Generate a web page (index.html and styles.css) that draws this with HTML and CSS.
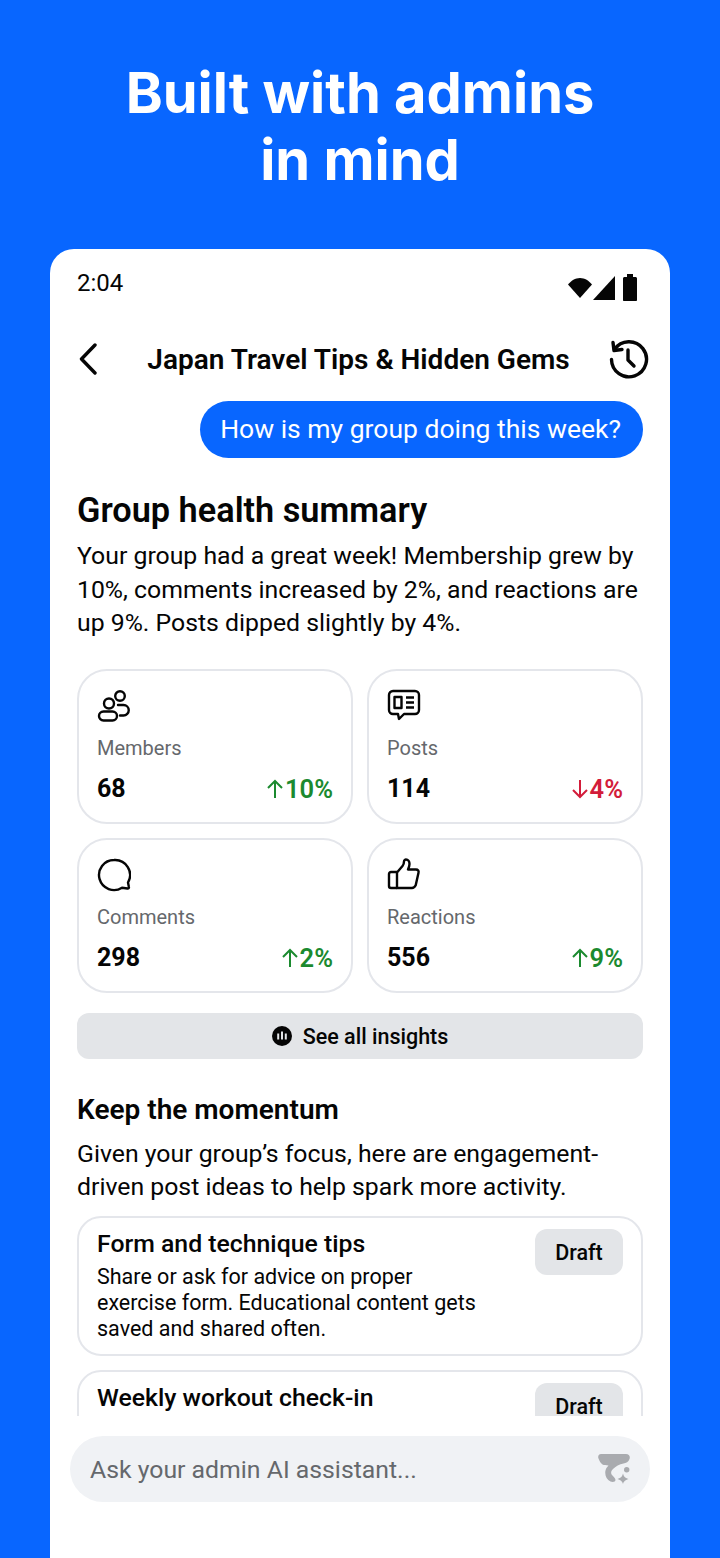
FILE: index.html
```html
<!DOCTYPE html>
<html lang="en">
<head>
    <meta charset="UTF-8" />
    <title>Built with admins in mind</title>
    <link rel="stylesheet" href="styles.css">
</head>
<body>
<h1 class="promo_title">Built with admins<br>in mind</h1>
<div class="phone">
    <div class="status_bar">
        <span class="status_time">2:04</span>
        <div class="status_icons">
            <svg class="wifi_icon" width="24" height="20" viewBox="0 0 24 20"><path d="M0 6.500C3 2.800 7.300 0 12 0s9 2.800 12 6.500L12 20z" fill="#050505"/></svg>
            <svg class="signal_icon" width="22" height="24" viewBox="0 0 22 24"><path d="M22 0v24H0z" fill="#050505"/></svg>
            <svg class="battery_icon" width="14" height="27" viewBox="0 0 14 27"><path d="M4 0h6v3h2.500c.8 0 1.500.7 1.500 1.500V26c0 .6-.5 1-1 1H1c-.6 0-1-.4-1-1V4.500C0 3.700.7 3 1.500 3H4z" fill="#050505"/></svg>
        </div>
    </div>

    <div class="top_bar">
        <svg class="back_icon" width="20" height="32" viewBox="0 0 20 32"><path d="M17 2 3.500 16 17 30" fill="none" stroke="#050505" stroke-width="3.400" stroke-linecap="round" stroke-linejoin="round"/></svg>
        <h2 class="top_title">Japan Travel Tips &amp; Hidden Gems</h2>
        <svg class="history_icon" width="40" height="40" viewBox="0 0 40 40"><g fill="none" stroke="#050505" stroke-width="3.400" stroke-linecap="round" stroke-linejoin="round"><path d="M5.500 10.500A17.500 17.500 0 1 1 2.500 20.500"/><path d="M4 3.500 5 11.500 13 10.500"/><path d="M19 11v10l6 6"/></g></svg>
    </div>

    <div class="chat">
        <div class="bubble_row"><div class="bubble">How is my group doing this week?</div></div>

        <h3 class="summary_title">Group health summary</h3>
        <p class="body_text">Your group had a great week! Membership grew by 10%, comments increased by 2%, and reactions are up 9%. Posts dipped slightly by 4%.</p>

        <div class="stat_grid">
            <div class="stat">
                <svg class="stat_icon" width="34" height="34" viewBox="0 0 34 34"><g fill="none" stroke="#050505" stroke-width="2.400"><circle cx="12" cy="14.500" r="5"/><rect x="2" y="22.500" width="18" height="9" rx="4.500"/><circle cx="23" cy="7" r="4.800"/><path d="M21 16h5.500a5.200 5.200 0 0 1 0 10.500H23" stroke-linecap="round"/></g></svg>
                <div class="stat_label">Members</div>
                <div class="stat_row"><span class="stat_num">68</span><span class="stat_delta up"><svg width="18" height="20" viewBox="0 0 18 20"><path d="M9 19V2M2 9l7-7 7 7" fill="none" stroke="currentColor" stroke-width="2"/></svg>10%</span></div>
            </div>
            <div class="stat">
                <svg class="stat_icon" width="34" height="34" viewBox="0 0 34 34"><g fill="none" stroke="#050505" stroke-width="2.400" stroke-linejoin="round"><path d="M6 2h22a4 4 0 0 1 4 4v15a4 4 0 0 1-4 4H17l-5 5-1-5H6a4 4 0 0 1-4-4V6a4 4 0 0 1 4-4z"/><rect x="7.500" y="8" width="7" height="11"/><path d="M19 8.500h8M19 13.500h8M19 18.500h8"/></g></svg>
                <div class="stat_label">Posts</div>
                <div class="stat_row"><span class="stat_num">114</span><span class="stat_delta down"><svg width="18" height="20" viewBox="0 0 18 20"><path d="M9 1v17M2 11l7 7 7-7" fill="none" stroke="currentColor" stroke-width="2"/></svg>4%</span></div>
            </div>
            <div class="stat">
                <svg class="stat_icon" width="34" height="34" viewBox="0 0 34 34"><path d="M17 2a15 15 0 1 0 8 27.700l5.500.8c1 .1 1.600-.5 1.400-1.400L31 24.500A15 15 0 0 0 17 2z" fill="none" stroke="#050505" stroke-width="2.400" stroke-linejoin="round"/></svg>
                <div class="stat_label">Comments</div>
                <div class="stat_row"><span class="stat_num">298</span><span class="stat_delta up"><svg width="18" height="20" viewBox="0 0 18 20"><path d="M9 19V2M2 9l7-7 7 7" fill="none" stroke="currentColor" stroke-width="2"/></svg>2%</span></div>
            </div>
            <div class="stat">
                <svg class="stat_icon" width="34" height="34" viewBox="0 0 34 34"><g fill="none" stroke="#050505" stroke-width="2.400" stroke-linejoin="round"><path d="M10 30V14.500L15.500 8c1-1.300 1.500-2.500 1.500-4.500 0-1.200 1-2 2-2 2 0 3.500 2 3.500 4.500 0 2-.6 3.500-1.500 5.500h8c2 0 3 1.500 2.500 3.200l-2.800 12.600C27.800 29 26.800 30 25 30z"/><path d="M10 14H4a2 2 0 0 0-2 2v12a2 2 0 0 0 2 2h6"/></g></svg>
                <div class="stat_label">Reactions</div>
                <div class="stat_row"><span class="stat_num">556</span><span class="stat_delta up"><svg width="18" height="20" viewBox="0 0 18 20"><path d="M9 19V2M2 9l7-7 7 7" fill="none" stroke="currentColor" stroke-width="2"/></svg>9%</span></div>
            </div>
        </div>

        <div class="insights_btn">
            <svg width="20" height="20" viewBox="0 0 20 20"><circle cx="10" cy="10" r="10" fill="#050505"/><path d="M6.200 7.500v6M10 5.500v8M13.800 7.500v6" stroke="#e3e5e8" stroke-width="2" fill="none"/></svg>
            See all insights
        </div>

        <h3 class="momentum_title">Keep the momentum</h3>
        <p class="body_text">Given your group’s focus, here are engagement-driven post ideas to help spark more activity.</p>

        <div class="idea">
            <div class="idea_text">
                <div class="idea_title">Form and technique tips</div>
                <div class="idea_desc">Share or ask for advice on proper exercise form. Educational content gets saved and shared often.</div>
            </div>
            <div class="draft_btn">Draft</div>
        </div>
        <div class="idea">
            <div class="idea_text">
                <div class="idea_title">Weekly workout check-in</div>
            </div>
            <div class="draft_btn">Draft</div>
        </div>
    </div>

    <div class="ask_bar">
        <span class="ask_text">Ask your admin AI assistant...</span>
        <svg width="32" height="30" viewBox="0 0 32 30"><path d="M3 0h25c3 0 4.500 2.500 3.500 5-1 3-3.500 4-6 4.500-4 .8-8 3-10.500 5.500-2 2-2.500 4-1 6 1.500 2 3.500 3 3.500 5 0 2-3 2.500-5 1.500-4-2-6-7-5-11 .5-2 1.500-3.500 3-5-2.500-.5-4.500 0-6-1-2-1.500-3-3.500-4-6C-.5 2 1 0 3 0z" fill="#a9abaf"/><circle cx="28.700" cy="15.700" r="2.700" fill="#a9abaf"/><path d="M25 19.500c.8 3 1.800 4.200 5.500 5.500-3.700 1.300-4.700 2.500-5.500 5-.8-2.500-1.800-3.700-5.500-5 3.700-1.300 4.700-2.500 5.500-5.500z" fill="#a9abaf"/></svg>
    </div>
</div>
</body>
</html>
```

FILE: styles.css
```css
*{
    box-sizing: border-box;
}
html,body{
    margin:0;
    padding:0;
}
body{
    width:720px;
    height:1558px;
    overflow:hidden;
    background:#0866ff;
    font-family:Roboto,"Liberation Sans",sans-serif;
    color:#050505;
}
h1,h2,h3,p{
    margin:0;
}

.promo_title{
    padding-top:60px;
    height:249px;
    text-align:center;
    font-family:Inter,"Liberation Sans",sans-serif;
    font-size:56px;
    line-height:67px;
    font-weight:700;
    color:#fff;
}

.phone{
    width:620px;
    height:1309px;
    margin:0 auto;
    background:#fff;
    border-radius:24px 24px 0 0;
    display:flex;
    flex-direction:column;
}

.status_bar{
    height:68px;
    padding:0 33px 0 27px;
    display:flex;
    justify-content:space-between;
    align-items:center;
}
.status_time{
    font-size:24px;
}
.status_icons{
    margin-top:9px;
    display:flex;
    align-items:flex-end;
    gap:1px;
}
.wifi_icon{
    margin-bottom:3px;
}
.signal_icon{
    margin-bottom:1px;
}
.battery_icon{
    margin-left:7px;
}

.top_bar{
    height:84px;
    padding:0 21px 0 28px;
    display:flex;
    align-items:center;
    justify-content:space-between;
}
.top_title{
    margin:1px 0 0 10px;
    font-size:28px;
    font-weight:600;
}

.chat{
    flex:none;
    padding:0 27px;
    height:1015px;
    overflow:hidden;
}

.bubble_row{
    display:flex;
    justify-content:flex-end;
}
.bubble{
    height:57px;
    padding:0 22px 0 20px;
    border-radius:29px;
    background:#0866ff;
    color:#fff;
    font-size:26.500px;
    line-height:56px;
}

.summary_title{
    margin-top:32px;
    font-size:34.300px;
    line-height:40px;
    font-weight:600;
}
.body_text{
    font-size:24.800px;
    line-height:33.500px;
}
.summary_title + .body_text{
    margin-top:9px;
}

.stat_grid{
    margin-top:29px;
    display:grid;
    grid-template-columns:276px 276px;
    gap:14px;
}
.stat{
    height:155px;
    padding:18px 18px 0;
    border:2px solid #e4e6eb;
    border-radius:30px;
}
.stat_icon{
    display:block;
}
.stat_label{
    margin-top:12px;
    font-size:20px;
    line-height:26px;
    color:#65686c;
}
.stat_row{
    margin-top:12px;
    display:flex;
    justify-content:space-between;
    align-items:center;
    line-height:32px;
}
.stat_num{
    font-size:25px;
    font-weight:700;
}
.stat_delta{
    display:flex;
    align-items:center;
    gap:1px;
    font-size:25.500px;
    font-weight:600;
}
.up{
    color:#1b8a2f;
}
.down{
    color:#d31c3a;
}

.insights_btn{
    margin-top:20px;
    height:46px;
    padding-top:1px;
    border-radius:12px;
    background:#e3e5e8;
    display:flex;
    align-items:center;
    justify-content:center;
    gap:11px;
    font-size:21.500px;
    font-weight:500;
}

.momentum_title{
    margin-top:33px;
    font-size:28px;
    line-height:36px;
    font-weight:600;
}
.momentum_title + .body_text{
    margin-top:9px;
}

.idea{
    margin-top:12px;
    height:140px;
    padding:11px 18px 0;
    border:2px solid #e4e6eb;
    border-radius:24px;
    display:flex;
    justify-content:space-between;
    align-items:flex-start;
}
.idea + .idea{
    margin-top:14px;
}
.idea_text{
    width:400px;
}
.idea_title{
    font-size:24.800px;
    line-height:30px;
    font-weight:500;
}
.idea_desc{
    margin-top:5px;
    font-size:21.500px;
    line-height:26px;
}
.draft_btn{
    width:88px;
    height:46px;
    border-radius:12px;
    background:#e3e5e8;
    text-align:center;
    line-height:48px;
    font-size:21.500px;
    font-weight:500;
}

.ask_bar{
    margin:20px 20px 0;
    height:66px;
    padding:0 20px;
    border-radius:33px;
    background:#f0f2f5;
    display:flex;
    align-items:center;
    justify-content:space-between;
}
.ask_text{
    font-size:24.800px;
    color:#65686c;
}
```
